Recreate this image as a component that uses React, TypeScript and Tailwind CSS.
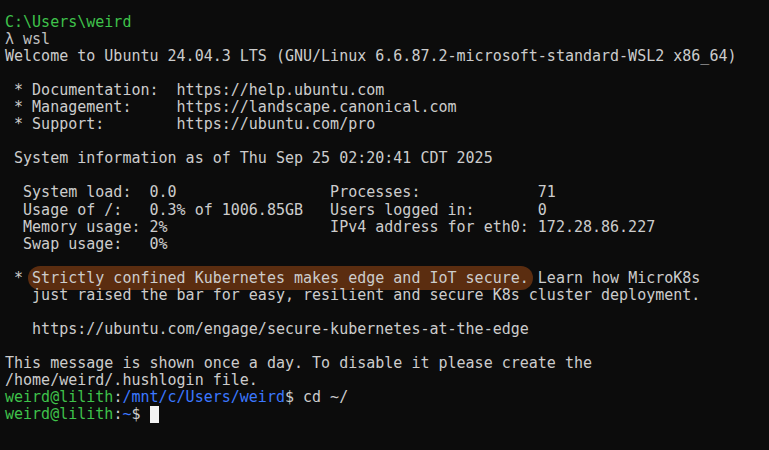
import React from "react";

const G = ({ children }: { children: React.ReactNode }) => (
  <span className="text-[#3fc24b]">{children}</span>
);
const B = ({ children }: { children: React.ReactNode }) => (
  <span className="text-[#3b78ff]">{children}</span>
);

export default function App() {
  return (
    <div className="w-[769px] h-[450px] bg-[#0c0c0c] overflow-hidden">
      <pre
        className="m-0 pl-[5px] pt-[14px] text-[15px] leading-[17.05px] text-[#cccccc] whitespace-pre"
        style={{ fontFamily: '"DejaVu Sans Mono", monospace' }}
      >
        <G>{"C:\\Users\\weird"}</G>
        {"\n"}
        <span className="text-[#c0c0c0]">{"λ wsl"}</span>
        {"\n"}
        {"Welcome to Ubuntu 24.04.3 LTS (GNU/Linux 6.6.87.2-microsoft-standard-WSL2 x86_64)\n"}
        {"\n"}
        {" * Documentation:  https://help.ubuntu.com\n"}
        {" * Management:     https://landscape.canonical.com\n"}
        {" * Support:        https://ubuntu.com/pro\n"}
        {"\n"}
        {" System information as of Thu Sep 25 02:20:41 CDT 2025\n"}
        {"\n"}
        {"  System load:  0.0                 Processes:             71\n"}
        {"  Usage of /:   0.3% of 1006.85GB   Users logged in:       0\n"}
        {"  Memory usage: 2%                  IPv4 address for eth0: 172.28.86.227\n"}
        {"  Swap usage:   0%\n"}
        {"\n"}
        {" * "}
        <span className="bg-[#5b2d10] rounded-full px-[4px] py-[3px] -mx-[4px]">
          {"Strictly confined Kubernetes makes edge and IoT secure."}
        </span>
        {" Learn how MicroK8s\n"}
        {"   just raised the bar for easy, resilient and secure K8s cluster deployment.\n"}
        {"\n"}
        {"   https://ubuntu.com/engage/secure-kubernetes-at-the-edge\n"}
        {"\n"}
        {"This message is shown once a day. To disable it please create the\n"}
        {"/home/weird/.hushlogin file.\n"}
        <G>{"weird@lilith"}</G>
        {":"}
        <B>{"/mnt/c/Users/weird"}</B>
        {"$ cd ~/\n"}
        <G>{"weird@lilith"}</G>
        {":"}
        <B>{"~"}</B>
        {"$ "}
        <span className="inline-block w-[9px] h-[17px] bg-[#f2f2f2] align-top"></span>
      </pre>
    </div>
  );
}
